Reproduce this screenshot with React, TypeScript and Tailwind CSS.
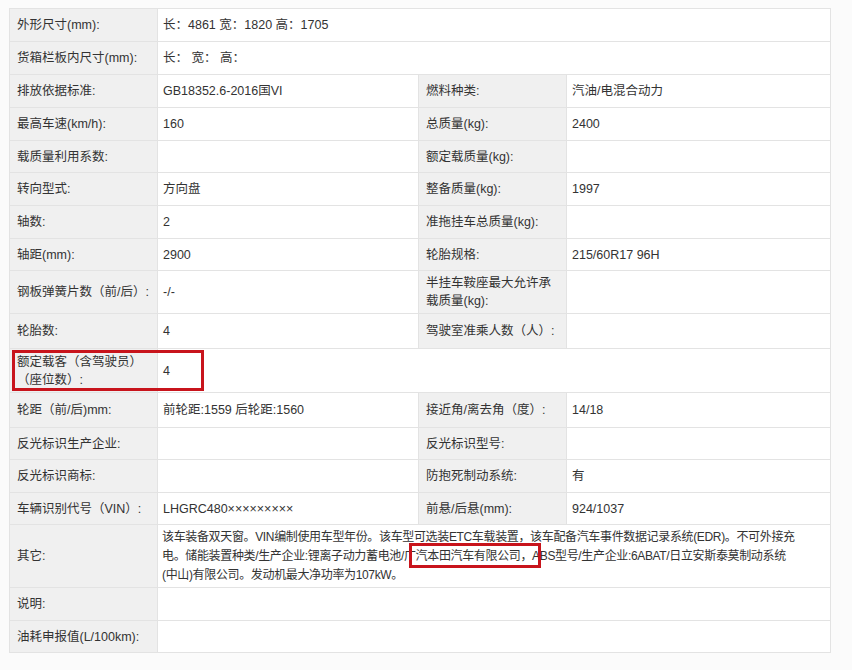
const font = { fontFamily: '"Liberation Sans", "Noto Sans CJK SC", sans-serif' };

type Row = { h: number; cells: string[] };

const rows: Row[] = [
  { h: 33, cells: ["外形尺寸(mm):", "长：4861 宽：1820 高：1705"] },
  { h: 33, cells: ["货箱栏板内尺寸(mm):", "长：  宽：  高："] },
  { h: 33, cells: ["排放依据标准:", "GB18352.6-2016国VI", "燃料种类:", "汽油/电混合动力"] },
  { h: 33, cells: ["最高车速(km/h):", "160", "总质量(kg):", "2400"] },
  { h: 32, cells: ["载质量利用系数:", "", "额定载质量(kg):", ""] },
  { h: 33, cells: ["转向型式:", "方向盘", "整备质量(kg):", "1997"] },
  { h: 33, cells: ["轴数:", "2", "准拖挂车总质量(kg):", ""] },
  { h: 32, cells: ["轴距(mm):", "2900", "轮胎规格:", "215/60R17 96H"] },
  { h: 43, cells: ["钢板弹簧片数（前/后）:", "-/-", "半挂车鞍座最大允许承载质量(kg):", ""] },
  { h: 35, cells: ["轮胎数:", "4", "驾驶室准乘人数（人）:", ""] },
  { h: 44, cells: ["额定载客（含驾驶员）（座位数）:", "4"] },
  { h: 35, cells: ["轮距（前/后)mm:", "前轮距:1559 后轮距:1560", "接近角/离去角（度）:", "14/18"] },
  { h: 32, cells: ["反光标识生产企业:", "", "反光标识型号:", ""] },
  { h: 33, cells: ["反光标识商标:", "", "防抱死制动系统:", "有"] },
  { h: 32, cells: ["车辆识别代号（VIN）:", "LHGRC480×××××××××", "前悬/后悬(mm):", "924/1037"] },
];

const tail: Row[] = [
  { h: 33, cells: ["说明:", ""] },
  { h: 32, cells: ["油耗申报值(L/100km):", ""] },
];

function Label({ text }: { text: string }) {
  return (
    <td className="bg-[#f0f0f0] border border-[#e3e3e3] px-[7px] align-middle leading-[18px]">{text}</td>
  );
}

function Value({ text, span }: { text: string; span?: number }) {
  return (
    <td colSpan={span} className="bg-white border border-[#e3e3e3] px-[5px] align-middle leading-[18px]">
      {text}
    </td>
  );
}

function TableRow({ row }: { row: Row }) {
  const [a, b, c, d] = row.cells;
  return (
    <tr style={{ height: row.h }}>
      <Label text={a} />
      {row.cells.length === 2 ? (
        <Value text={b} span={3} />
      ) : (
        <>
          <Value text={b} />
          <Label text={c} />
          <Value text={d} />
        </>
      )}
    </tr>
  );
}

export default function App() {
  return (
    <div className="w-[852px] h-[670px] bg-[#fbfbfb] pt-[8px] pl-[9px] relative" style={font}>
      <table className="border-collapse table-fixed w-[821px] text-[12.5px] text-[#333]">
        <colgroup>
          <col className="w-[148px]" />
          <col className="w-[261px]" />
          <col className="w-[148px]" />
          <col className="w-[264px]" />
        </colgroup>
        <tbody>
          {rows.map((r, i) => (
            <TableRow key={i} row={r} />
          ))}
          <tr style={{ height: 63 }}>
            <Label text="其它:" />
            <td colSpan={3} className="bg-white border border-[#e3e3e3] px-[4px] align-middle leading-[19px] text-[12px] tracking-[-0.35px] whitespace-nowrap overflow-hidden">
              该车装备双天窗。VIN编制使用车型年份。该车型可选装ETC车载装置，该车配备汽车事件数据记录系统(EDR)。不可外接充
              <br />
              电。储能装置种类/生产企业:锂离子动力蓄电池/广汽本田汽车有限公司，ABS型号/生产企业:6ABAT/日立安斯泰莫制动系统
              <br />
              (中山)有限公司。发动机最大净功率为107kW。
            </td>
          </tr>
          {tail.map((r, i) => (
            <TableRow key={i} row={r} />
          ))}
        </tbody>
      </table>
      <div className="absolute left-[12px] top-[350px] w-[192px] h-[41px] border-[3px] border-[#c8141c]" />
      <div className="absolute left-[409px] top-[543px] w-[132px] h-[25px] border-[3px] border-[#c8141c]" />
    </div>
  );
}
